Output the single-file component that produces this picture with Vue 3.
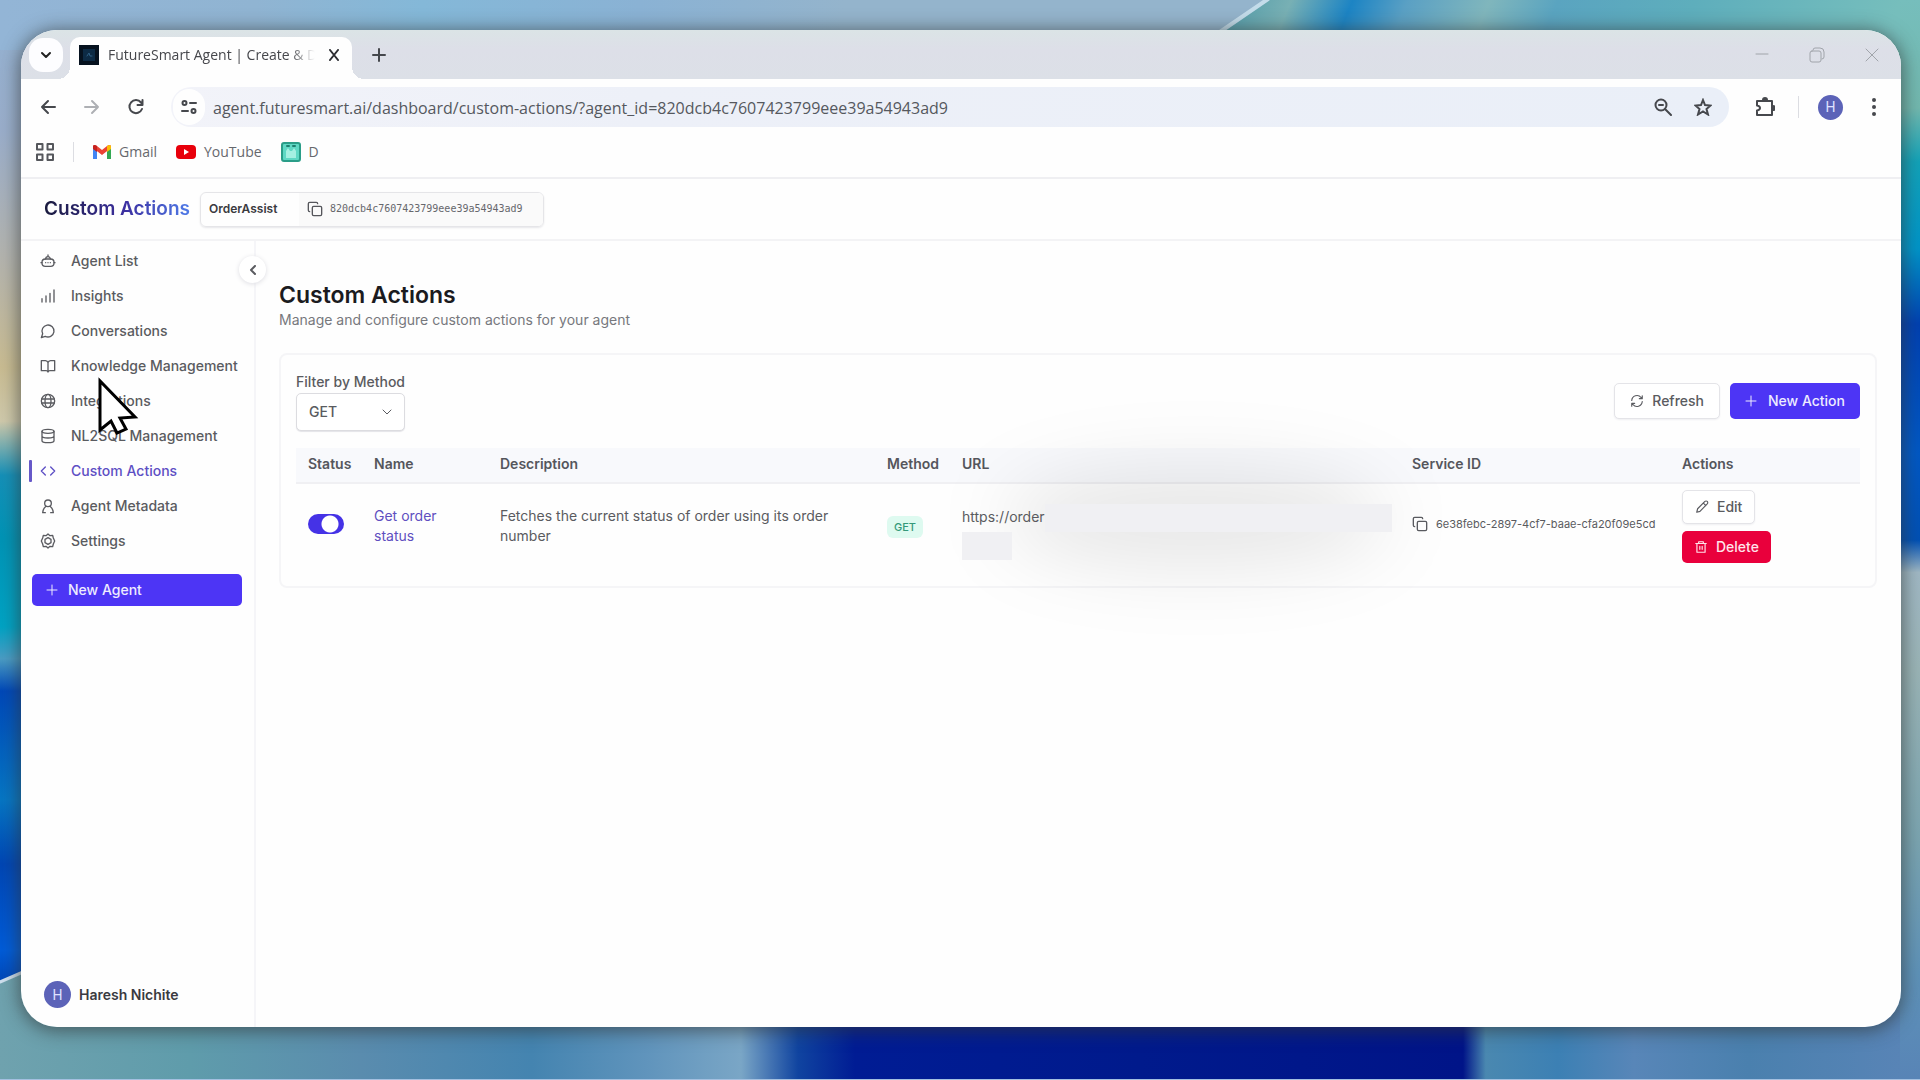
<script setup>
import { ref } from 'vue'

const agentId = '820dcb4c7607423799eee39a54943ad9'
const address = ref('agent.futuresmart.ai/dashboard/custom-actions/?agent_id=' + agentId)
const method = ref('GET')
const active = ref('Custom Actions')

const nav = [
  { label: 'Agent List', icon: '<rect x="3" y="9" width="18" height="11" rx="5"/><path d="M8.500 9a3.500 3.500 0 0 1 7 0M12 5.500V3M1.500 14.500H3M21 14.500h1.500M8.500 14.500h.01M12 14.500h.01M15.500 14.500h.01"/>' },
  { label: 'Insights', icon: '<path d="M3 21v-5M9 21v-9M15 21V8M21 21V3"/>' },
  { label: 'Conversations', icon: '<path d="M7.900 20A9 9 0 1 0 4 16.100L2 22Z"/>' },
  { label: 'Knowledge Management', icon: '<path d="M12 6.500v14.500M2 4h6a4 4 0 0 1 4 3 4 4 0 0 1 4-3h6v15h-7a3 3 0 0 0-3 2 3 3 0 0 0-3-2H2Z"/>' },
  { label: 'Integrations', icon: '<circle cx="12" cy="12" r="10"/><ellipse cx="12" cy="12" rx="4.500" ry="10"/><path d="M2.500 9h19M2.500 15h19"/>' },
  { label: 'NL2SQL Management', icon: '<ellipse cx="12" cy="5" rx="9" ry="3"/><path d="M3 5v14c0 1.700 4 3 9 3s9-1.300 9-3V5M3 12c0 1.700 4 3 9 3s9-1.300 9-3"/>' },
  { label: 'Custom Actions', icon: '<path d="m16 18 6-6-6-6M8 6l-6 6 6 6"/>' },
  { label: 'Agent Metadata', icon: '<circle cx="12" cy="8" r="5"/><path d="M4 22c0-4 2-7 5-9.500M20 22c0-4-2-7-5-9.500M4 22h4M16 22h4"/>' },
  { label: 'Settings', icon: '<path d="m12 1.500 3 2.500 4-.500 1 4 2 4.500-2 4.500-1 4-4-.500-3 2.500-3-2.500-4 .500-1-4L2 12l2-4.500 1-4 4 .500Z"/><path d="m12 7 4.500 2.500v5L12 17l-4.500-2.500v-5Z"/>' },
]

const actions = ref([
  {
    enabled: true,
    name: 'Get order status',
    description: 'Fetches the current status of order using its order number',
    method: 'GET',
    url: 'https://order',
    serviceId: '6e38febc-2897-4cf7-baae-cfa20f09e5cd',
  },
])
</script>

<template>
  <div class="desktop">
    <svg class="wallpaper" viewBox="0 0 1920 1080" preserveAspectRatio="none" aria-hidden="true">
      <defs>
        <linearGradient id="wl" x1="0" y1="0" x2="0" y2="1">
          <stop offset="0" stop-color="#93b2d2" /><stop offset=".12" stop-color="#9aaecb" />
          <stop offset=".24" stop-color="#b4b4ae" /><stop offset=".34" stop-color="#c9bc92" />
          <stop offset=".39" stop-color="#cfc9ab" /><stop offset=".44" stop-color="#1590b8" />
          <stop offset=".5" stop-color="#0094b6" /><stop offset=".58" stop-color="#00a3c4" />
          <stop offset=".61" stop-color="#4a9cc4" /><stop offset=".64" stop-color="#0048b8" />
          <stop offset=".74" stop-color="#0676c4" /><stop offset=".8" stop-color="#0046b4" />
          <stop offset=".88" stop-color="#005cd8" /><stop offset=".93" stop-color="#0038a0" />
          <stop offset="1" stop-color="#00308c" />
        </linearGradient>
        <linearGradient id="wr" x1="0" y1="0" x2="0" y2="1">
          <stop offset="0" stop-color="#76bebc" /><stop offset=".1" stop-color="#72b8ae" />
          <stop offset=".15" stop-color="#12a2b8" /><stop offset=".23" stop-color="#0094c8" />
          <stop offset=".3" stop-color="#0040b0" /><stop offset=".42" stop-color="#0058c4" />
          <stop offset=".5" stop-color="#0050b4" /><stop offset=".53" stop-color="#a0b8c4" />
          <stop offset=".62" stop-color="#9ab4b6" /><stop offset=".78" stop-color="#7aa4b0" />
          <stop offset=".9" stop-color="#5e92b8" /><stop offset="1" stop-color="#5884b6" />
        </linearGradient>
        <linearGradient id="wt" x1="0" y1="0" x2="1" y2="0">
          <stop offset="0" stop-color="#93b5d6" /><stop offset=".2" stop-color="#90b4d2" />
          <stop offset=".33" stop-color="#84b8d8" /><stop offset=".5" stop-color="#8ab2d4" />
          <stop offset=".66" stop-color="#94b4cc" />
        </linearGradient>
        <linearGradient id="wt2" x1="0" y1="0" x2="1" y2=".03">
          <stop offset="0" stop-color="#4a98a8" /><stop offset=".11" stop-color="#78b0b4" />
          <stop offset=".2" stop-color="#1c84c4" /><stop offset=".28" stop-color="#5aa0c4" />
          <stop offset=".4" stop-color="#80b6bc" /><stop offset=".5" stop-color="#5aa4c0" />
          <stop offset=".7" stop-color="#5eaebc" /><stop offset="1" stop-color="#76bebc" />
        </linearGradient>
        <linearGradient id="wb" x1="0" y1="0" x2="1" y2="0">
          <stop offset="0" stop-color="#6fa2ae" /><stop offset=".1" stop-color="#5f9cab" />
          <stop offset=".19" stop-color="#5a8cae" /><stop offset=".28" stop-color="#4484b0" />
          <stop offset=".34" stop-color="#6094bc" /><stop offset=".39" stop-color="#7aa6c6" />
          <stop offset=".42" stop-color="#1044a0" /><stop offset=".45" stop-color="#001c94" />
          <stop offset=".6" stop-color="#001a8c" /><stop offset=".77" stop-color="#001488" />
          <stop offset=".782" stop-color="#4a88b0" /><stop offset=".82" stop-color="#3c80b4" />
          <stop offset=".86" stop-color="#5886b8" /><stop offset=".92" stop-color="#4a80ae" />
          <stop offset="1" stop-color="#5884b6" />
        </linearGradient>
      </defs>
      <rect width="960" height="1080" fill="url(#wl)" />
      <rect x="960" width="960" height="1080" fill="url(#wr)" />
      <rect width="1280" height="50" fill="url(#wt)" />
      <path d="M1216 34 1266 0H1900V50H1216Z" fill="url(#wt2)" />
      <path d="M1214 36 1268 -1" stroke="#c4dcea" stroke-width="4" />
      <path d="M0 983 30 970V1010H1900V1080H0Z" fill="url(#wb)" />
      <path d="M0 982 30 969" stroke="#cfe0ee" stroke-width="3" />
      <rect y="1079" width="1920" height="1" fill="#a4c0e0" />
    </svg>

    <div class="frame">
      <div class="window">
        <header class="tabs">
          <button class="tab-search" aria-label="Search tabs">
            <svg width="12" height="12" viewBox="0 0 12 12"><path d="m2 4 4 4 4-4" stroke-width="2" /></svg>
          </button>
          <div class="tab">
            <svg class="favicon" width="20" height="20" viewBox="0 0 20 20"><rect width="20" height="20" fill="#06121f" stroke="none" /><rect x="4" y="4" width="12" height="12" fill="#0d2b45" stroke="none" /><path d="M8 11l2-3 1 3h2" stroke="#2f5f84" stroke-width="1" /></svg>
            <span class="tab-title">FutureSmart Agent | Create &amp; D</span>
            <button class="plain" aria-label="Close tab"><svg width="12" height="12" viewBox="0 0 12 12"><path d="m2 1 8 10M10 1 2 11" stroke-width="2" /></svg></button>
          </div>
          <button class="plain new-tab" aria-label="New tab"><svg width="14" height="14" viewBox="0 0 14 14"><path d="M7 1v12M1 7h12" stroke-width="2" /></svg></button>
          <div class="controls">
            <button class="plain" aria-label="Minimize"><svg width="16" height="16" viewBox="0 0 16 16"><path d="M2 7h12" /></svg></button>
            <button class="plain" aria-label="Restore"><svg width="16" height="16" viewBox="0 0 16 16"><rect x="1" y="4" width="11" height="11" rx="2" /><path d="M4 3q0-2 2-2h5q4 0 4 4v5q0 2-2 2" /></svg></button>
            <button class="plain" aria-label="Close window"><svg width="16" height="16" viewBox="0 0 16 16"><path d="m2 2 12 12M14 2 2 14" /></svg></button>
          </div>
        </header>

        <div class="toolbar">
          <button class="plain" aria-label="Back"><svg width="16" height="16" viewBox="0 0 16 16"><path d="M15 8H2M8 2 2 8l6 6" stroke-width="2" /></svg></button>
          <button class="plain dim" aria-label="Forward"><svg width="16" height="16" viewBox="0 0 16 16"><path d="M1 8h13M8 2l6 6-6 6" stroke-width="2" /></svg></button>
          <button class="plain" aria-label="Reload"><svg width="16" height="16" viewBox="0 0 16 16"><path d="M14 10a6.500 6.500 0 1 1-1-6.500L14 5M14.500 1v5h-5" stroke-width="2" /></svg></button>
          <div class="omnibox">
            <button class="plain site" aria-label="Site information"><svg width="16" height="16" viewBox="0 0 16 16"><circle cx="3.500" cy="4" r="2" stroke-width="2" /><path d="M9 4h6M1 12h6" stroke-width="2" /><circle cx="12.500" cy="12" r="2" stroke-width="2" /></svg></button>
            <input v-model="address" type="text" aria-label="Address" />
            <button class="plain" aria-label="Zoom"><svg width="18" height="18" viewBox="0 0 18 18"><circle cx="7" cy="7" r="5.500" stroke-width="2" /><path d="m11 11 6 6M5 7h4" stroke-width="2" /></svg></button>
            <button class="plain" aria-label="Bookmark"><svg width="18" height="18" viewBox="0 0 18 18"><path d="m9 2 2 5 5.500.500-4 3.500 1.500 5.500-5-3-5 3L5.500 11l-4-3.500L7 7Z" stroke-width="2" stroke-linejoin="miter" /></svg></button>
          </div>
          <button class="plain" aria-label="Extensions"><svg width="20" height="20" viewBox="0 0 20 20"><path d="M2 4h15v14H2v-4.500q3-.500 3-2.500T2 8.500Z" stroke-width="2" /><path d="M8 3a2 2 0 0 1 4 0ZM18 9a2 2 0 0 1 0 4Z" fill="currentColor" /></svg></button>
          <span class="rule"></span>
          <button class="avatar small" aria-label="Profile">H</button>
          <button class="plain" aria-label="Menu"><svg width="6" height="20" viewBox="0 0 6 20"><path d="M3 3h.01M3 10h.01M3 17h.01" stroke-width="4" /></svg></button>
        </div>

        <nav class="bookmarks" aria-label="Bookmarks">
          <button class="plain" aria-label="All tab groups"><svg width="18" height="18" viewBox="0 0 18 18"><path d="M1 1h5.500v5.500H1ZM11.500 1H17v5.500h-5.500ZM1 11.500h5.500V17H1ZM11.500 11.500H17V17h-5.500Z" stroke-width="2" /></svg></button>
          <span class="rule"></span>
          <a href="#gmail">
            <svg width="18" height="14" viewBox="0 0 18 14" stroke="none"><path d="M0 2v12h4V6Z" fill="#4285f4" /><path d="M18 2v12h-4V6Z" fill="#34a853" /><path d="M0 3V1q1-2 4 0l5 4 5-4q3-2 4 0v2l-9 7Z" fill="#ea4335" /><path d="M14 1q3-2 4 0v3l-4 3Z" fill="#fbbc04" /><path d="M0 3V1q1-2 4 0v6L0 4Z" fill="#c5221f" /></svg>
            Gmail
          </a>
          <a href="#youtube">
            <svg width="20" height="14" viewBox="0 0 20 14" stroke="none"><rect width="20" height="14" rx="4" fill="#e8000b" /><path d="m8 4 5 3-5 3Z" fill="#fff" /></svg>
            YouTube
          </a>
          <a href="#d">
            <svg width="20" height="20" viewBox="0 0 20 20"><rect x="1" y="1" width="18" height="18" rx="2" fill="#5fd8c4" stroke="#2a9d88" stroke-width="2" /><path d="M5 16V9l2-3 2 3h2l2-3 2 3v7Z" fill="#a5f0e2" stroke="none" /><path d="M6 4h2M12 4h2" stroke="#1f7f70" /></svg>
            D
          </a>
        </nav>

        <div class="app">
          <header class="app-head">
            <span class="brand">Custom Actions</span>
            <div class="agent">
              <strong>OrderAssist</strong>
              <button class="agent-id" aria-label="Copy agent ID">
                <svg width="16" height="16" viewBox="0 0 24 24"><rect x="8" y="8" width="14" height="14" rx="2" /><path d="M4 16a2 2 0 0 1-2-2V4a2 2 0 0 1 2-2h10a2 2 0 0 1 2 2" /></svg>
                <code>{{ agentId }}</code>
              </button>
            </div>
          </header>

          <div class="body">
            <aside class="sidebar">
              <nav class="menu" aria-label="Agent">
                <a v-for="item in nav" :key="item.label" href="#" :class="{ active: item.label === active }" @click.prevent="active = item.label">
                  <svg width="16" height="16" viewBox="0 0 24 24" v-html="item.icon"></svg>
                  {{ item.label }}
                </a>
              </nav>
              <button class="primary new-agent">
                <svg width="12" height="12" viewBox="0 0 12 12"><path d="M6 1v10M1 6h10" /></svg>
                New Agent
              </button>
              <div class="user"><span class="avatar">H</span><span>Haresh Nichite</span></div>
              <button class="collapse" aria-label="Collapse sidebar"><svg width="10" height="10" viewBox="0 0 10 10"><path d="M7 1 3 5l4 4" stroke-width="2" /></svg></button>
              <svg class="pointer" width="42" height="58" viewBox="0 0 42 58" aria-hidden="true"><path d="M2 4V53L13 44 19 56 28 52 22 41 37 40Z" fill="#fff" stroke="#000" stroke-width="3" stroke-linejoin="miter" /></svg>
            </aside>

            <main class="main">
              <h1>Custom Actions</h1>
              <p class="lead">Manage and configure custom actions for your agent</p>

              <section class="card">
                <div class="bar">
                  <div class="filter">
                    <label for="method">Filter by Method</label>
                    <div class="select">
                      <select id="method" v-model="method"><option>GET</option><option>POST</option></select>
                      <svg width="10" height="10" viewBox="0 0 10 10"><path d="m1 3 4 4 4-4" /></svg>
                    </div>
                  </div>
                  <div class="bar-buttons">
                    <button class="ghost tall">
                      <svg width="16" height="16" viewBox="0 0 24 24"><path d="M3 11a9 9 0 0 1 16-5l2 2M21 3v5h-5M21 13a9 9 0 0 1-16 5l-2-2M3 21v-5h5" /></svg>
                      Refresh
                    </button>
                    <button class="primary tall">
                      <svg width="12" height="12" viewBox="0 0 12 12"><path d="M6 1v10M1 6h10" /></svg>
                      New Action
                    </button>
                  </div>
                </div>

                <table>
                  <colgroup><col class="c-status" /><col class="c-name" /><col class="c-desc" /><col class="c-method" /><col /><col class="c-service" /><col class="c-actions" /></colgroup>
                  <thead>
                    <tr><th>Status</th><th>Name</th><th>Description</th><th>Method</th><th>URL</th><th>Service ID</th><th>Actions</th></tr>
                  </thead>
                  <tbody>
                    <tr v-for="row in actions" :key="row.serviceId">
                      <td><input v-model="row.enabled" class="switch" type="checkbox" role="switch" aria-label="Enabled" /></td>
                      <td><a href="#" class="name">{{ row.name }}</a></td>
                      <td>{{ row.description }}</td>
                      <td><span class="badge">{{ row.method }}</span></td>
                      <td>
                        <div class="url">
                          <div class="url-line"><span>{{ row.url }}</span><i class="mask"></i></div>
                          <i class="mask short"></i>
                        </div>
                      </td>
                      <td>
                        <div class="service">
                          <button class="plain" aria-label="Copy service ID"><svg width="16" height="16" viewBox="0 0 24 24"><rect x="8" y="8" width="14" height="14" rx="2" /><path d="M4 16a2 2 0 0 1-2-2V4a2 2 0 0 1 2-2h10a2 2 0 0 1 2 2" /></svg></button>
                          <span>{{ row.serviceId }}</span>
                        </div>
                      </td>
                      <td>
                        <div class="row-buttons">
                          <button class="ghost"><svg width="16" height="16" viewBox="0 0 24 24"><path d="M3 21l1.500-6L17 2.500a2.800 2.800 0 0 1 4 0 2.800 2.800 0 0 1 0 4L8.500 19.500ZM14.500 5.500l4 4" /></svg>Edit</button>
                          <button class="danger"><svg width="16" height="16" viewBox="0 0 24 24"><path d="M3 6h18M5 6v15h14V6M8 6V3h8v3M10 11v5M14 11v5" /></svg>Delete</button>
                        </div>
                      </td>
                    </tr>
                  </tbody>
                </table>
              </section>
            </main>
          </div>
        </div>
      </div>
    </div>
  </div>
</template>

<style>
body { margin: 0; }
</style>

<style scoped>
* { box-sizing: border-box; }
.desktop {
  position: relative;
  display: flex;
  min-height: 100vh;
  padding: 30px 19px 53px 21px;
  overflow: hidden;
  font-family: Inter, "Liberation Sans", sans-serif;
  font-size: 14px;
  line-height: 20px;
  color: #5a5b60;
}
svg { flex: none; fill: none; stroke: currentColor; stroke-width: 2; stroke-linecap: round; stroke-linejoin: round; }
svg[stroke="none"] { stroke: none; }
.wallpaper { position: absolute; inset: 0; width: 100%; height: 100%; stroke: none; }
button, input, select { font: inherit; color: inherit; }
button { display: flex; align-items: center; border: 0; padding: 0; cursor: pointer; }
a { color: inherit; text-decoration: none; }
.plain { justify-content: center; background: none; }

.frame {
  position: relative;
  flex: 1;
  min-width: 0;
  display: flex;
  border-radius: 36px;
  box-shadow: 0 2px 18px 2px rgba(50, 55, 55, .65);
}
.window {
  flex: 1;
  min-width: 0;
  display: flex;
  flex-direction: column;
  overflow: hidden;
  border-radius: 36px;
  background: #fefefe;
}

/* browser chrome */
.tabs { display: flex; align-items: center; height: 49px; padding: 7px 21px 0 8px; background: linear-gradient(#dbe4e6, #dddfe8 40%, #dce0e7); }
.tab-search { justify-content: center; width: 34px; height: 34px; margin: 0 7px 6px 0; border-radius: 14px; background: #fdfdff; color: #222; }
.tab { display: flex; align-items: center; gap: 9px; width: 282px; height: 42px; padding: 0 12px 6px 9px; border-radius: 10px 10px 0 0; background: #fefefe; color: #2d2e33; position: relative; }
.tab::before, .tab::after { content: ""; position: absolute; bottom: 0; width: 12px; height: 12px; }
.tab::before { right: 100%; background: radial-gradient(circle at 0 0, transparent 12px, #fefefe 12px); }
.tab::after { left: 100%; background: radial-gradient(circle at 100% 0, transparent 12px, #fefefe 12px); }
.tab-title { flex: 1; overflow: hidden; white-space: nowrap; font: 14px/20px "Open Sans", "Noto Sans", sans-serif; color: #46474c; -webkit-mask-image: linear-gradient(90deg, #000 86%, transparent 98%); mask-image: linear-gradient(90deg, #000 86%, transparent 98%); }
.new-tab { margin: 0 0 6px 20px; color: #44474c; }
.controls { display: flex; gap: 39px; margin: 0 0 6px auto; color: #a0a4aa; }
.controls svg { stroke-width: 1; }

.toolbar { display: flex; align-items: center; gap: 28px; height: 56px; padding: 0 24px 0 19px; color: #46484d; }
.dim { color: #aeb0b4; }
.omnibox { flex: 1; display: flex; align-items: center; gap: 22px; height: 40px; margin: 0 -2px 0 -1px; padding: 0 17px 0 2px; border-radius: 20px; background: linear-gradient(90deg, #f2f3f9, #edf0f8 30%, #eaeff8); }
.site { width: 32px; height: 36px; margin-right: -14px; border-radius: 16px; background: #fefefe; }
.omnibox input { flex: 1; min-width: 0; border: 0; padding: 2px 0 0; outline: 0; background: none; font: 16px/24px "Open Sans", "Noto Sans", sans-serif; color: #55585e; }
.toolbar > .rule { height: 22px; margin: 0 -9px 0 -5px; }
.rule { width: 1px; height: 20px; background: #dcdde2; }
.avatar { display: flex; align-items: center; justify-content: center; width: 27px; height: 27px; border-radius: 50%; background: #5c63b8; color: #dfe2ff; font: 14px/20px Roboto, sans-serif; }
.avatar.small { width: 25px; height: 25px; }

.bookmarks { display: flex; align-items: center; gap: 19px; height: 44px; padding: 0 15px 8px; border-bottom: 2px solid #efeff2; font: 14px/20px "Open Sans", "Noto Sans", sans-serif; color: #66686d; }
.bookmarks a { display: flex; align-items: center; gap: 8px; }
.bookmarks .plain { color: #55575c; }

/* application */
.app { flex: 1; display: flex; flex-direction: column; }
.app-head { display: flex; align-items: center; gap: 10px; height: 62px; padding: 0 23px; border-bottom: 2px solid #f3f3f5; }
.brand { font-size: 19px; line-height: 28px; font-weight: 600; background: linear-gradient(90deg, #191a3c, #3c2fa0 55%, #4f7be8); -webkit-background-clip: text; background-clip: text; color: transparent; }
.agent { display: flex; align-items: center; height: 35px; border: 1px solid #e5e5e8; border-radius: 6px; box-shadow: 0 1px 2px #e6e6e9; overflow: hidden; }
.agent strong { width: 98px; padding-left: 8px; font-size: 12px; font-weight: 600; color: #3a3a40; }
.agent-id { gap: 7px; height: 100%; padding: 0 20px 0 8px; background: #fafafa; color: #55565b; }
.agent-id code { font: 10px/20px "DejaVu Sans Mono", "Liberation Mono", monospace; color: #66676c; }

.body { flex: 1; display: flex; }
.sidebar { position: relative; display: flex; flex-direction: column; width: 235px; padding: 2px 12px 19px 11px; border-right: 2px solid #f5f5f8; }
.menu { display: flex; flex-direction: column; }
.menu a { display: flex; align-items: center; gap: 15px; height: 35px; padding-left: 8px; font-weight: 500; position: relative; white-space: nowrap; }
.menu .active { color: #5d4fc4; }
.menu .active::before { content: ""; position: absolute; left: -3px; width: 3px; height: 22px; border-radius: 1px; background: #6658c8; }
.primary, .danger, .ghost { gap: 11px; border-radius: 5px; font-weight: 500; white-space: nowrap; }
.primary { background: #4d35f5; color: #eeecff; }
.primary svg { stroke-width: 1; }
.new-agent { height: 32px; margin-top: 16px; padding-left: 14px; gap: 10px; font-weight: 500; }
.user { display: flex; align-items: center; gap: 8px; margin-top: auto; padding-left: 12px; font-weight: 600; color: #3a3a40; }
.collapse { position: absolute; top: 15px; right: -12px; justify-content: center; width: 27px; height: 27px; border-radius: 50%; background: #fff; box-shadow: 0 1px 5px #dedee3; }
.pointer { position: absolute; left: 77px; top: 136px; z-index: 2; }

.main { flex: 1; min-width: 0; padding: 38px 24px 40px 23px; }
h1 { margin: 0; font-size: 23px; line-height: 32px; font-weight: 600; color: #1b1b1f; }
.lead { margin: 0; line-height: 18px; color: #77787d; }
.card { margin-top: 24px; padding: 16px 15px 2px; border: 2px solid #f5f5f7; border-radius: 8px; }
.bar { display: flex; justify-content: space-between; align-items: flex-end; margin-bottom: 17px; }
.filter label { display: block; font-weight: 500; line-height: 22px; }
.select { position: relative; width: 109px; }
.select select { appearance: none; width: 100%; height: 38px; padding: 0 12px; border: 1px solid #dcdce0; border-radius: 5px; background: #fff; box-shadow: 0 1px 1px #e4e4e8; font-weight: 500; }
.select svg { position: absolute; right: 13px; top: 14px; stroke-width: 1; pointer-events: none; }
.bar-buttons { display: flex; gap: 10px; padding-bottom: 12px; }
.ghost { height: 34px; padding: 0 12px; border: 1px solid #e4e4e8; background: #fff; gap: 8px; box-shadow: 0 1px 2px #efeff2; }
.danger { height: 32px; padding: 0 12px; gap: 8px; background: #e9003c; color: #ffe4ea; }
.ghost svg, .danger svg { width: 14px; height: 14px; }
.tall { height: 36px; padding: 0 15px; }

table { width: 100%; table-layout: fixed; border-collapse: collapse; }
.c-status { width: 66px; } .c-name { width: 126px; } .c-desc { width: 387px; } .c-method { width: 75px; } .c-service { width: 270px; } .c-actions { width: 190px; }
th { height: 35px; padding: 0 12px 3px; text-align: left; font-weight: 600; background: #f8f9fc; border-bottom: 2px solid #f0f0f3; color: #55565c; white-space: nowrap; }
td { height: 101px; padding: 0 12px 16px; vertical-align: middle; }
td:nth-child(2) { padding-right: 36px; }
td:nth-child(3) { padding-right: 40px; }
td:nth-child(n+4) { padding-right: 0; }
td:nth-child(4) { padding-bottom: 14px; }
td:nth-child(1), td:nth-child(6) { padding-bottom: 20px; }
.name { color: #5f4fc0; }
.switch { appearance: none; display: block; width: 36px; height: 20px; margin: 0; border-radius: 10px; background: radial-gradient(circle at 22px 10px, #fff 8px, #4532e6 9px); }
.badge { display: inline-block; height: 22px; padding: 0 7px; border-radius: 6px; background: #defaf0; color: #35997a; font-size: 11px; line-height: 22px; font-weight: 500; }
.url { position: relative; padding-top: 12px; }
.url::before { content: ""; position: absolute; left: 40px; right: 10px; top: -24px; height: 100px; border-radius: 50%; background: rgba(0, 0, 0, .09); filter: blur(36px); pointer-events: none; }
.url-line { position: relative; display: flex; height: 28px; line-height: 26px; }
.mask { flex: 1; margin-right: 8px; background: #f0f0f3; }
.mask.short { position: relative; display: block; width: 50px; height: 28px; }
.service { display: flex; align-items: center; gap: 8px; font-size: 11px; white-space: nowrap; }
.row-buttons { display: flex; flex-direction: column; align-items: flex-start; gap: 7px; }
</style>
